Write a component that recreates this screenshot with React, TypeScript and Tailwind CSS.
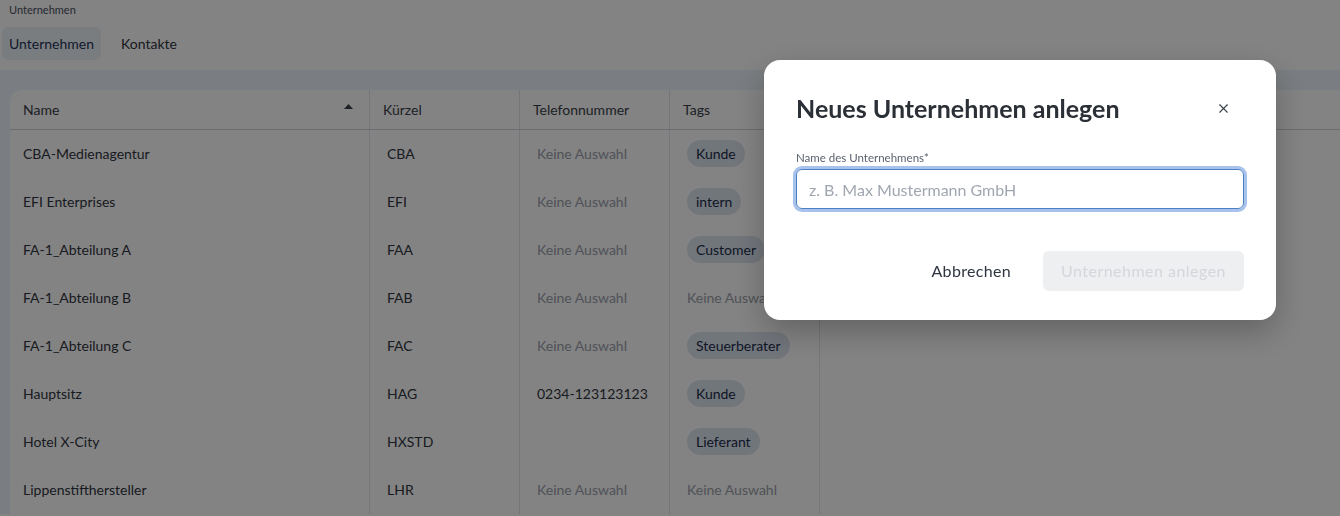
import { X } from 'lucide-react'

type Row = {
    name: string
    short: string
    phone: string | null
    tag: string | null
}

const rows: Row[] = [
    { name: 'CBA-Medienagentur', short: 'CBA', phone: null, tag: 'Kunde' },
    { name: 'EFI Enterprises', short: 'EFI', phone: null, tag: 'intern' },
    { name: 'FA-1_Abteilung A', short: 'FAA', phone: null, tag: 'Customer' },
    { name: 'FA-1_Abteilung B', short: 'FAB', phone: null, tag: null },
    { name: 'FA-1_Abteilung C', short: 'FAC', phone: null, tag: 'Steuerberater' },
    { name: 'Hauptsitz', short: 'HAG', phone: '0234-123123123', tag: 'Kunde' },
    { name: 'Hotel X-City', short: 'HXSTD', phone: '', tag: 'Lieferant' },
    { name: 'Lippenstifthersteller', short: 'LHR', phone: null, tag: null },
]

const cols = 'grid grid-cols-[360px_150px_150px_150px_1fr]'

function Empty() {
    return <span className="text-[#9aa1ab]">Keine Auswahl</span>
}

export default function App() {
    return (
        <div className="h-[516px] overflow-hidden bg-white text-[14px] text-[#2f3540] font-['Lato',sans-serif]">
            <div className="px-[9px] pt-[2px] text-[11px] text-[#4b5260]">Unternehmen</div>
            <div className="flex items-center gap-2 px-[2px] pt-[8px] pb-[10px]">
                <div className="rounded-md bg-[#eef3f9] px-[7px] py-[6px] text-[#1f3558]">Unternehmen</div>
                <div className="ml-1 px-2 py-[6px] text-[#2f3540]">Kontakte</div>
            </div>
            <div className="bg-[#eef4fb] pl-[10px] pt-5">
                <div className="rounded-tl-xl bg-white">
                    <div className={`${cols} h-10 border-b border-[#ccd3db] text-[#3a404a]`}>
                        <div className="flex items-center justify-between border-r border-[#e3e5e8] px-[13px]">
                            <span>Name</span>
                            <svg width="9" height="6" viewBox="0 0 9 6" className="mr-[3px] mb-1">
                                <path d="M4.5 0L9 5H0z" fill="#3a404a" />
                            </svg>
                        </div>
                        <div className="flex items-center border-r border-[#e3e5e8] px-[13px]">Kürzel</div>
                        <div className="flex items-center border-r border-[#e3e5e8] px-[13px]">Telefonnummer</div>
                        <div className="flex items-center border-r border-[#e3e5e8] px-[13px]">Tags</div>
                        <div />
                    </div>
                    {rows.map((r) => (
                        <div key={r.name} className={`${cols} h-12`}>
                            <div className="flex items-center border-r border-[#e3e5e8] px-[13px]">{r.name}</div>
                            <div className="flex items-center border-r border-[#e3e5e8] px-[17px]">{r.short}</div>
                            <div className="flex items-center border-r border-[#e3e5e8] px-[17px]">
                                {r.phone === null ? <Empty /> : r.phone}
                            </div>
                            <div className="flex items-center border-r border-[#e3e5e8] px-[17px]">
                                {r.tag ? (
                                    <span className="rounded-full bg-[#dde5f0] px-[9px] py-[3px] text-[#1c2c4c] whitespace-nowrap">
                                        {r.tag}
                                    </span>
                                ) : (
                                    <span className="whitespace-nowrap">
                                        <Empty />
                                    </span>
                                )}
                            </div>
                            <div />
                        </div>
                    ))}
                </div>
            </div>

            {/* overlay */}
            <div className="fixed inset-0 bg-black/[0.486]" />

            {/* dialog */}
            <div className="fixed left-[764px] top-[60px] w-[512px] rounded-2xl bg-white px-8 pt-[33px] pb-[29px] shadow-[0_12px_32px_rgba(0,0,0,0.25)]">
                <div className="flex items-center justify-between">
                    <h2 className="text-[25px] font-bold leading-[30px] text-[#2b2f36]">Neues Unternehmen anlegen</h2>
                    <button className="mr-[13px] text-[#3a404a]" aria-label="Schließen">
                        <X className="h-[15px] w-[15px]" strokeWidth={1.8} />
                    </button>
                </div>
                <label className="mt-[26px] block text-[11.5px] text-[#5b6270]">Name des Unternehmens*</label>
                <input
                    className="mt-[3px] h-10 w-full rounded-md border border-[#4e7fc6] px-3 text-[16px] text-[#2f3540] outline-none ring-[3px] ring-[#a7c3ec] placeholder:text-[#a0a6b0]"
                    placeholder="z. B. Max Mustermann GmbH"
                />
                <div className="mt-[42px] flex items-center justify-end gap-4">
                    <button className="px-4 py-2 text-[16px] tracking-[0.02em] text-[#2f3540]">Abbrechen</button>
                    <button
                        disabled
                        className="h-10 w-[201px] rounded-md bg-[#eeeff1] text-[16px] tracking-[0.03em] text-[#d3d6db]"
                    >
                        Unternehmen anlegen
                    </button>
                </div>
            </div>
        </div>
    )
}
